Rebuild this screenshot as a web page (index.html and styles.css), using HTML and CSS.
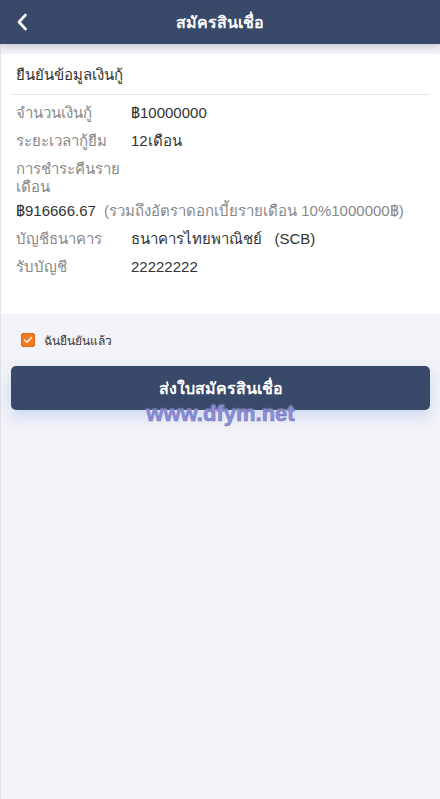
FILE: index.html
```html
<!DOCTYPE html>
<html lang="th">
<head>
<meta charset="utf-8">
<title>สมัครสินเชื่อ</title>
<link rel="stylesheet" href="styles.css">
</head>
<body>
<div class="page">
  <header class="topbar">
    <a class="back" href="#" aria-label="back">
      <svg width="12" height="18" viewBox="0 0 12 18"><path d="M9.5 2 L3 9 L9.5 16" fill="none" stroke="#fff" stroke-width="2.6" stroke-linecap="round" stroke-linejoin="round"/></svg>
    </a>
    <h1 class="title">สมัครสินเชื่อ</h1>
  </header>

  <section class="card">
    <h2 class="card-title">ยืนยันข้อมูลเงินกู้</h2>
    <div class="rows">
      <div class="row"><span class="label">จำนวนเงินกู้</span><span class="value">฿10000000</span></div>
      <div class="row"><span class="label">ระยะเวลากู้ยืม</span><span class="value">12เดือน</span></div>
      <div class="row wrap"><span class="label">การชำระคืนรายเดือน</span><span class="value">฿916666.67 <span class="note">(รวมถึงอัตราดอกเบี้ยรายเดือน 10%1000000฿)</span></span></div>
      <div class="row"><span class="label">บัญชีธนาคาร</span><span class="value">ธนาคารไทยพาณิชย์ &nbsp; (SCB)</span></div>
      <div class="row"><span class="label">รับบัญชี</span><span class="value">22222222</span></div>
    </div>
  </section>

  <label class="agree">
    <span class="check">
      <svg width="10" height="8" viewBox="0 0 10 8"><path d="M1.5 4 L4 6.3 L8.5 1.5" fill="none" stroke="#fff" stroke-width="1.4" stroke-linecap="round" stroke-linejoin="round"/></svg>
    </span>
    <span class="agree-text">ฉันยืนยันแล้ว</span>
  </label>

  <div class="actions">
    <button class="submit" type="button">ส่งใบสมัครสินเชื่อ</button>
    <span class="watermark">www.dfym.net</span>
  </div>
</div>
</body>
</html>
```
FILE: styles.css
```css
* { box-sizing: border-box; }
html, body { margin: 0; padding: 0; }
body {
  background: #f3f3f8;
  font-family: Tahoma, "Liberation Sans", "Noto Sans", sans-serif;
  color: #333;
}
.page {
  min-height: 799px;
  border-left: 1px solid #e2e2e6;
}
.topbar {
  height: 44px;
  background: #38496a;
  display: flex;
  align-items: center;
  justify-content: center;
  box-shadow: 0 2px 8px rgba(40, 50, 80, 0.25);
  margin-left: -1px;
  position: relative;
}
.back {
  position: absolute;
  left: 16px;
  top: 13px;
  display: flex;
}
.title {
  margin: 0;
  color: #fff;
  font-size: 16px;
  font-weight: bold;
}
.card {
  margin-top: 10px;
  background: #fff;
  padding: 0 10px 33px;
}
.card-title {
  margin: 0;
  font-size: 15px;
  font-weight: normal;
  color: #333;
  padding: 9px 5px 7px;
  border-bottom: 1px solid #e6e6ea;
}
.rows {
  padding: 4px 5px 0;
}
.row {
  display: flex;
  flex-wrap: wrap;
  font-size: 15px;
  line-height: 28px;
}
.label {
  width: 115px;
  color: #888;
}
.row.wrap .label {
  line-height: 18px;
  padding-top: 5px;
  padding-bottom: 1px;
}
.value {
  color: #333;
}
.note {
  color: #888;
  margin-left: 4px;
}
.agree {
  display: flex;
  align-items: center;
  gap: 9px;
  padding: 12px 20px 0;
  height: 40px;
}
.check {
  width: 14px;
  height: 14px;
  border-radius: 2px;
  background: #f47a1f;
  border: 1px solid #d86a1a;
  display: flex;
  align-items: center;
  justify-content: center;
}
.agree-text {
  font-size: 12px;
  color: #333;
}
.actions {
  position: relative;
  padding: 12px 10px 0;
}
.submit {
  width: 100%;
  height: 44px;
  border: none;
  border-radius: 5px;
  background: #38496a;
  color: #fff;
  font-family: inherit;
  font-size: 16px;
  font-weight: bold;
  box-shadow: 0 6px 16px rgba(110, 150, 230, 0.3);
}
.watermark {
  position: absolute;
  left: 0;
  right: 0;
  top: 47px;
  text-align: center;
  font-family: "Liberation Sans", Arial, sans-serif;
  font-weight: bold;
  font-size: 22px;
  color: #8e8fd8;
  -webkit-text-stroke: 0.6px #6f72c0;
  text-shadow: 0 0 2px #fff;
  pointer-events: none;
}
```
